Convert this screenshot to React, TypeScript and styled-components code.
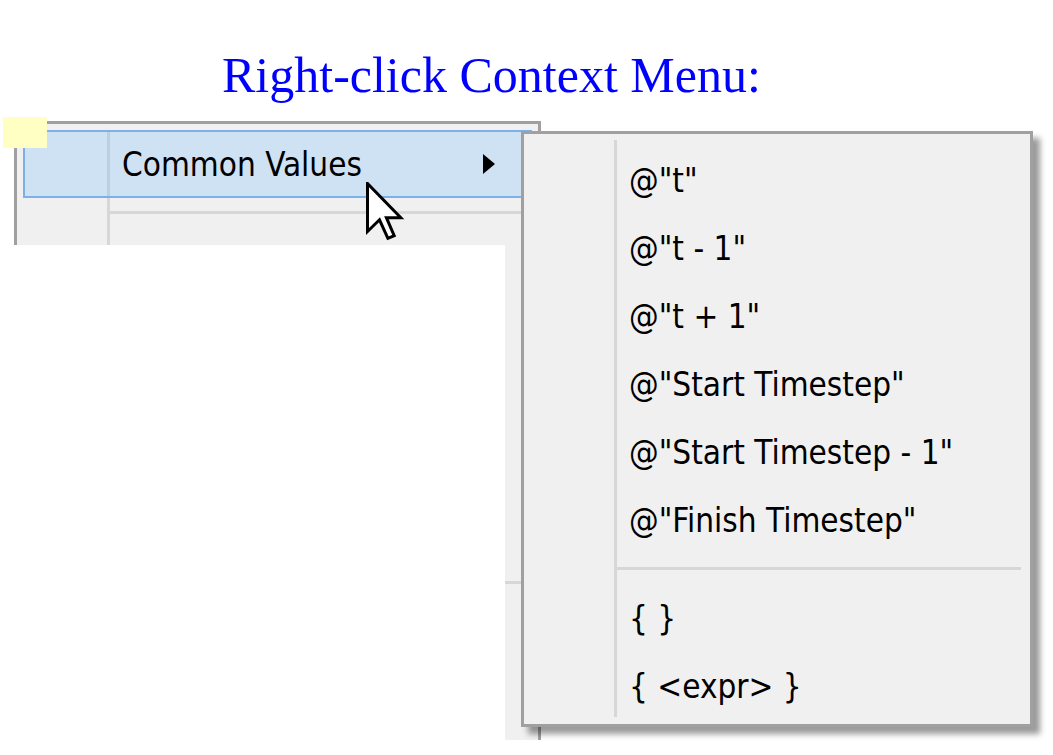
import React from "react"
import styled, { createGlobalStyle } from "styled-components"

const GlobalStyle = createGlobalStyle`
  html, body {
    margin: 0;
    padding: 0;
    background: #ffffff;
  }
`

const Page = styled.div`
  position: relative;
  width: 1053px;
  height: 755px;
  overflow: hidden;
  background: #ffffff;
  font-family: "DejaVu Sans Condensed", "DejaVu Sans", sans-serif;
  font-stretch: condensed;
`

const Title = styled.h1`
  margin: 0;
  padding: 50px 0 0 222px;
  height: 50px;
  font-family: "Liberation Serif", "Times New Roman", serif;
  font-stretch: normal;
  font-size: 50px;
  font-weight: 400;
  line-height: 50px;
  color: #0000ff;
  white-space: nowrap;
`

// bit of a yellow tooltip peeking out from under the menu
const Note = styled.div`
  position: absolute;
  left: 3px;
  top: 117px;
  width: 44px;
  height: 31px;
  background: #ffffc4;
`

const MenuBase = styled.div`
  box-sizing: border-box;
  display: flex;
  flex-direction: column;
  border: 3px solid #a0a0a0;
  background:
    linear-gradient(#d7d7d7, #d7d7d7) 90px 6px / 3px calc(100% - 13px) no-repeat,
    #f0f0f0;
`

const Menu = styled(MenuBase)`
  width: 527px;
  height: 619px;
  margin: 21px 0 0 14px;
  padding: 6px 6px 0;
  border-bottom: 0;
`

const SubMenu = styled(MenuBase)`
  position: absolute;
  left: 521px;
  top: 131px;
  width: 512px;
  height: 596px;
  padding: 12px 6px 0;
  box-shadow: 7px 7px 6px rgba(0, 0, 0, 0.4);
`

const Item = styled.div<{ $active?: boolean }>`
  box-sizing: border-box;
  display: flex;
  align-items: center;
  flex: 0 0 68px;
  padding: 0 35px 0 97px;
  border: 2px solid ${({ $active }) => ($active ? "#7db0e8" : "transparent")};
  background: ${({ $active }) => ($active ? "rgba(108, 184, 252, 0.25)" : "transparent")};
  font-size: 33px;
  color: #000000;
  white-space: nowrap;
`

const Separator = styled.div`
  flex: 0 0 30px;
  display: flex;
  padding: 13px 3px 0 87px;
  box-sizing: border-box;

  &::after {
    content: "";
    flex: 1;
    height: 3px;
    background: #d7d7d7;
  }
`

const SubArrow = styled.span`
  margin-left: auto;
  width: 0;
  height: 0;
  border-top: 10px solid transparent;
  border-bottom: 10px solid transparent;
  border-left: 12px solid #000000;
`

// bottom-left of the screenshot was blanked out
const Mask = styled.div`
  position: absolute;
  left: 0;
  top: 245px;
  width: 505px;
  height: 510px;
  background: #ffffff;
`

const Cursor = styled.svg`
  position: absolute;
  left: 366px;
  top: 182px;
`

const values = [
  '@"t"',
  '@"t - 1"',
  '@"t + 1"',
  '@"Start Timestep"',
  '@"Start Timestep - 1"',
  '@"Finish Timestep"',
]

const App = () => (
  <Page>
    <GlobalStyle />
    <Title>Right-click Context Menu:</Title>
    <Note />

    <Menu>
      <Item $active>
        Common Values
        <SubArrow />
      </Item>
      <Separator />
      <Item />
      <Item />
      <Item />
      <Item />
      <Item />
      <Separator />
    </Menu>

    <Mask />

    <SubMenu>
      {values.map((value) => (
        <Item key={value}>{value}</Item>
      ))}
      <Separator />
      <Item>{"{ }"}</Item>
      <Item>{"{ <expr> }"}</Item>
    </SubMenu>

    <Cursor width="39" height="60" viewBox="0 0 13 20">
      <path
        d="M0.5 0.5 V16.5 L4.5 12.6 L7.3 18.8 L9.4 17.9 L6.8 11.9 H11.6 Z"
        fill="#ffffff"
        stroke="#000000"
        strokeWidth="1"
        strokeLinejoin="miter"
      />
    </Cursor>
  </Page>
)

export default App
